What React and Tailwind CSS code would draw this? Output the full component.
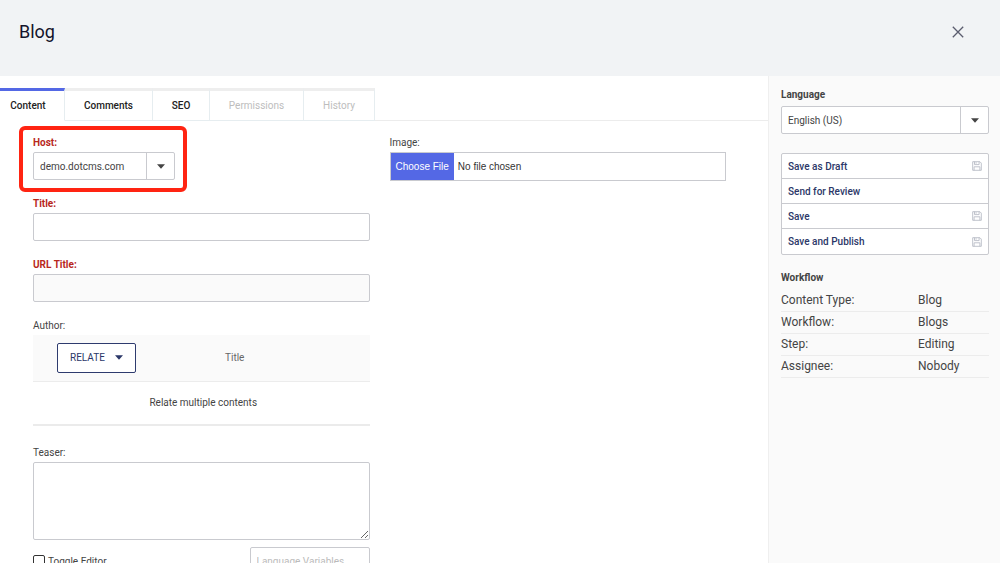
import React, { useState } from 'react';
import clsx from 'clsx';

const tabs = [
    { name: 'Content', className: 'w-[65px] pr-2' },
    { name: 'Comments', className: 'w-[88px]' },
    { name: 'SEO', className: 'w-[57px]' },
    { name: 'Permissions', className: 'w-[94px]', disabled: true },
    { name: 'History', className: 'w-[71px]', disabled: true },
];

const actions = [
    { name: 'Save as Draft', saves: true },
    { name: 'Send for Review', saves: false },
    { name: 'Save', saves: true },
    { name: 'Save and Publish', saves: true },
];

const workflow = [
    ['Content Type:', 'Blog'],
    ['Workflow:', 'Blogs'],
    ['Step:', 'Editing'],
    ['Assignee:', 'Nobody'],
];

const Caret = () => (
    <svg width="8" height="5" viewBox="0 0 8 5" fill="currentColor" aria-hidden="true">
        <path d="M0 0.2h8L4 4.8z" />
    </svg>
);

const SaveIcon = () => (
    <svg width="10" height="10" viewBox="0 0 10 10" fill="none" stroke="#b9bcc6" strokeWidth="0.9" aria-hidden="true">
        <path d="M0.7 0.7h7.2l1.4 1.4v7.2H0.7z" />
        <path d="M2.5 0.7v2.9h4.6V0.7M4.1 1.2v1.5" />
        <path d="M2.1 9.3V5.8h5.8v3.5" />
    </svg>
);

const CloseIcon = () => (
    <svg width="12" height="12" viewBox="0 0 12 12" fill="none" stroke="#5a5c6e" strokeWidth="1.3" aria-hidden="true">
        <path d="M0.8 0.8l10.4 10.4M11.2 0.8L0.8 11.2" />
    </svg>
);

const Select = ({ id, options }) => (
    <div className="relative">
        <select
            id={id}
            className="block h-7 w-full appearance-none rounded-xs border border-[#c9cacf] bg-white pr-8 pl-1.5 text-[10px] text-[#444]"
        >
            {options.map((option) => (
                <option key={option}>{option}</option>
            ))}
        </select>
        <span className="pointer-events-none absolute inset-y-0 right-0 flex w-[29px] items-center justify-center border-l border-[#c9cacf] text-[#444]">
            <Caret />
        </span>
    </div>
);

const Field = ({ id, label, required, children }) => (
    <div>
        <label
            htmlFor={id}
            className={clsx('mb-px block text-[10px] leading-4', required ? 'font-bold text-[#b8281c]' : 'text-[#444]')}
        >
            {label}
        </label>
        {children}
    </div>
);

const Tabs = () => {
    const [active, setActive] = useState('Content');

    return (
        <div className="flex" role="tablist">
            {tabs.map((tab) => (
                <button
                    key={tab.name}
                    role="tab"
                    aria-selected={active === tab.name}
                    disabled={tab.disabled}
                    onClick={() => setActive(tab.name)}
                    className={clsx(
                        'h-[33px] border-t-3 border-r border-b border-r-[#e6edf0] text-[10px]',
                        tab.className,
                        active === tab.name ? 'border-t-[#5468e5] border-b-white' : 'border-t-[#eeeeee] border-b-[#e6edf0]',
                        tab.disabled ? 'text-[#bdbdbd]' : 'font-medium text-[#222]'
                    )}
                >
                    {tab.name}
                </button>
            ))}
            <div className="flex-1 border-b border-[#ececec]" />
        </div>
    );
};

const RelatedContent = () => (
    <table className="mb-[3px] w-full border-b-2 border-[#ebebeb]">
        <thead>
            <tr className="h-[46px] border-b border-[#ececec] bg-[#fafafa]">
                <th className="w-[192px] pl-6 text-left">
                    <button
                        id="author"
                        type="button"
                        className="flex h-[30px] items-center gap-2.5 rounded-xs border border-[#2e3b6e] bg-white px-3 text-[10px] font-normal text-[#2b3768]"
                    >
                        RELATE
                        <Caret />
                    </button>
                </th>
                <th className="text-left text-[10px] font-normal text-[#666]">Title</th>
            </tr>
        </thead>
        <tbody>
            <tr className="h-11">
                <td colSpan={2} className="pl-1 text-center text-[10px] text-[#444]">
                    Relate multiple contents
                </td>
            </tr>
        </tbody>
    </table>
);

const ContentForm = () => (
    <form className="grid grid-cols-2 gap-5 pt-3.5 pr-[42px] pl-[33px]">
        <div className="flex flex-col gap-4">
            <div className="relative w-[142px]">
                <Field id="host" label="Host:" required>
                    <Select id="host" options={['demo.dotcms.com']} />
                </Field>
                <div className="pointer-events-none absolute -top-[9px] -right-3 -bottom-3 -left-3.5 rounded-md border-4 border-[#ff2412]" />
            </div>
            <Field id="title" label="Title:" required>
                <input id="title" type="text" className="block h-7 w-full rounded-xs border border-[#c9cacf] px-2 text-[10px]" />
            </Field>
            <Field id="urlTitle" label="URL Title:" required>
                <input id="urlTitle" type="text" readOnly className="block h-7 w-full rounded-xs border border-[#c9cacf] bg-[#fafafa] px-2 text-[10px]" />
            </Field>
            <Field id="author" label="Author:">
                <RelatedContent />
            </Field>
            <div>
                <Field id="teaser" label="Teaser:">
                    <textarea id="teaser" className="block h-[78px] w-full rounded-xs border border-[#c9cacf] p-2 text-[10px]" />
                </Field>
                <div className="mt-[7px] flex items-center justify-between">
                    <label className="flex items-center gap-[3px] text-[10px] text-[#444]">
                        <input type="checkbox" className="size-3 appearance-none rounded-xs border border-[#333] bg-white checked:bg-[#5468e5]" />
                        Toggle Editor
                    </label>
                    <input
                        type="text"
                        aria-label="Language Variables"
                        placeholder="Language Variables"
                        className="h-7 w-[120px] rounded-xs border border-[#c9cacf] px-1.5 text-[10px] placeholder:text-[#bbb]"
                    />
                </div>
            </div>
        </div>
        <Field id="image" label="Image:">
            <input
                id="image"
                type="file"
                className="block h-[29px] w-full border border-[#c9cacf] font-['Liberation_Sans',sans-serif] text-[10px] leading-[27px] text-[#333] file:mr-1 file:h-[27px] file:bg-[#5468e5] file:px-[5px] file:text-white"
            />
        </Field>
    </form>
);

const Sidebar = () => (
    <aside className="w-[232px] shrink-0 border-l border-[#efefef] bg-[#fafafa] pt-2.5 pr-[11px] pl-3">
        <label htmlFor="language" className="mb-0.5 block text-[10px] leading-[18px] font-bold text-[#444]">
            Language
        </label>
        <Select id="language" options={['English (US)']} />

        <div className="mt-[19px] divide-y divide-[#c9cacf] rounded-xs border border-[#c9cacf] bg-white">
            {actions.map((action) => (
                <button
                    key={action.name}
                    className="flex h-[25px] w-full items-center justify-between px-1.5 text-[10px] font-medium text-[#2b3768]"
                >
                    {action.name}
                    {action.saves && <SaveIcon />}
                </button>
            ))}
        </div>

        <h2 className="mt-3.5 mb-0.5 text-[10px] leading-[18px] font-bold text-[#444]">Workflow</h2>
        <table className="w-full text-[12px] text-[#444]">
            <tbody>
                {workflow.map(([label, value]) => (
                    <tr key={label} className="h-[22px] border-b border-[#ececec]">
                        <th className="w-[137px] text-left leading-5 font-normal">{label}</th>
                        <td className="leading-5">{value}</td>
                    </tr>
                ))}
            </tbody>
        </table>
    </aside>
);

const App = () => (
    <div className="flex h-screen flex-col overflow-hidden bg-white font-[Roboto,sans-serif]">
        <header className="flex h-[76px] shrink-0 items-start justify-between bg-[#f1f3f5] pt-[18px] pr-9 pl-[19px]">
            <h1 className="text-[18px] leading-7 text-[#14142b]">Blog</h1>
            <button aria-label="Close" className="flex h-7 items-center">
                <CloseIcon />
            </button>
        </header>
        <div className="flex min-h-0 flex-1">
            <main className="min-w-0 flex-1 overflow-hidden pt-3">
                <Tabs />
                <ContentForm />
            </main>
            <Sidebar />
        </div>
    </div>
);

export default App;
